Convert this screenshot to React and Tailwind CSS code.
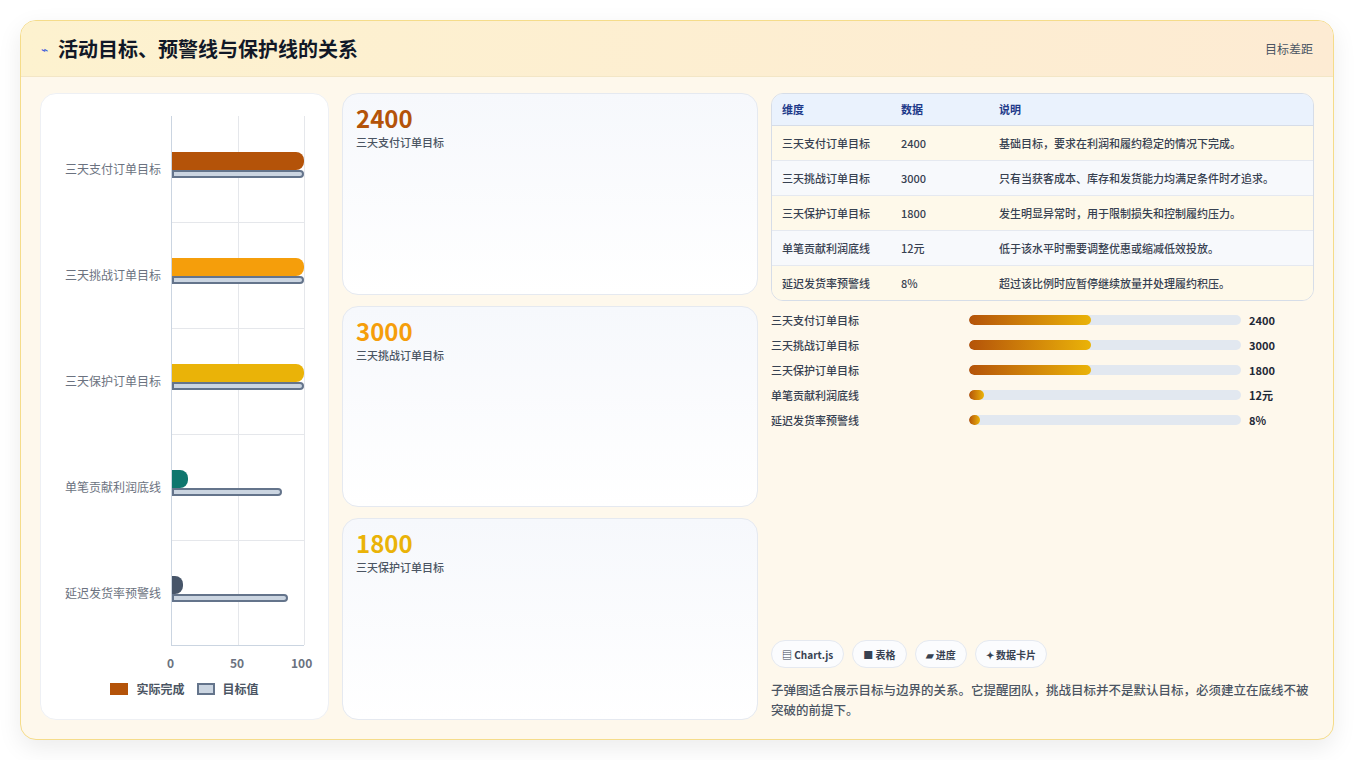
import React from "react";

const F = { fontFamily: '"Noto Sans CJK SC", "Noto Sans", sans-serif' };

const cats = [
  { n: "三天支付订单目标", a: 100, t: 100, c: "#b45309" },
  { n: "三天挑战订单目标", a: 100, t: 100, c: "#f59e0b" },
  { n: "三天保护订单目标", a: 100, t: 100, c: "#eab308" },
  { n: "单笔贡献利润底线", a: 12, t: 83, c: "#0f766e" },
  { n: "延迟发货率预警线", a: 8, t: 88, c: "#475569" },
];
const rows = [
  ["三天支付订单目标", "2400", "基础目标，要求在利润和履约稳定的情况下完成。"],
  ["三天挑战订单目标", "3000", "只有当获客成本、库存和发货能力均满足条件时才追求。"],
  ["三天保护订单目标", "1800", "发生明显异常时，用于限制损失和控制履约压力。"],
  ["单笔贡献利润底线", "12元", "低于该水平时需要调整优惠或缩减低效投放。"],
  ["延迟发货率预警线", "8%", "超过该比例时应暂停继续放量并处理履约积压。"],
];
const prog = [
  ["三天支付订单目标", 45, "2400"],
  ["三天挑战订单目标", 45, "3000"],
  ["三天保护订单目标", 45, "1800"],
  ["单笔贡献利润底线", 5.5, "12元"],
  ["延迟发货率预警线", 4, "8%"],
];

export default function App() {
  return (
    <div style={F} className="w-[1354px] h-[760px] bg-white p-5 box-border">
      <div className="h-[720px] rounded-2xl border border-[#f5dc8a] bg-[#fef8ec] shadow-[0_8px_24px_rgba(0,0,0,0.08)] flex flex-col overflow-hidden">
        <div className="h-[56px] shrink-0 flex items-center justify-between px-5 bg-gradient-to-r from-[#fdf2cf] to-[#fdebd3] border-b border-[#f3e6c6]">
          <div className="flex items-center gap-[10px]">
            <span className="text-[#3b5bdb] text-[12px]">⌁</span>
            <span className="text-[20px] font-bold text-[#111827]">活动目标、预警线与保护线的关系</span>
          </div>
          <span className="text-[12px] text-[#4b5563]">目标差距</span>
        </div>
        <div className="flex-1 flex gap-[13px] px-[19px] pt-4 pb-[19px]">
          {/* chart */}
          <div className="w-[289px] shrink-0 bg-white rounded-2xl border border-[#eef0f4] flex flex-col pt-[22px] pb-[20px]">
            <div className="flex">
              <div className="w-[130px] flex flex-col">
                {cats.map((c) => (
                  <div key={c.n} className="h-[106px] flex items-center justify-end pr-[10px] text-[12px] text-[#6b7280]">{c.n}</div>
                ))}
              </div>
              <div className="relative w-[133px] h-[530px] border-l border-b border-[#cbd5e1]">
                <div className="absolute left-[66px] top-0 bottom-0 w-px bg-[#e5e7eb]" />
                <div className="absolute left-[132px] top-0 bottom-0 w-px bg-[#e5e7eb]" />
                {cats.map((c, i) => (
                  <div key={c.n} className="absolute left-0 right-0" style={{ top: i * 106, height: 106 }}>
                    {i > 0 && <div className="absolute left-0 right-0 top-0 h-px bg-[#e5e7eb]" />}
                    <div className="absolute left-0 top-[36px] h-[18px] rounded-r-[8px]" style={{ width: `${c.a}%`, background: c.c }} />
                    <div className="absolute left-0 top-[54px] h-[8px] rounded-r-[4px] bg-[#cbd5e1] border-2 border-[#64748b]" style={{ width: `${c.t}%` }} />
                  </div>
                ))}
              </div>
            </div>
            <div className="relative h-[20px] ml-[130px] w-[140px] mt-[8px] text-[12px] font-bold text-[#6b7280]">
              <span className="absolute left-[-4px]">0</span>
              <span className="absolute left-[59px]">50</span>
              <span className="absolute left-[120px]">100</span>
            </div>
            <div className="flex justify-center items-center gap-2 mt-[6px] text-[12px] font-bold text-[#4b5563]">
              <span className="w-[18px] h-[12px] bg-[#b45309]" />实际完成
              <span className="w-[18px] h-[12px] bg-[#cbd5e1] border-2 border-[#64748b] ml-1" />目标值
            </div>
          </div>
          {/* cards */}
          <div className="w-[416px] shrink-0 flex flex-col gap-[11px]">
            {[["2400", "三天支付订单目标", "#b45309"], ["3000", "三天挑战订单目标", "#f59e0b"], ["1800", "三天保护订单目标", "#eab308"]].map(([v, l, c]) => (
              <div key={v} className="flex-1 rounded-2xl border border-[#e5e9f0] bg-gradient-to-b from-[#f6f8fc] to-white px-[13px] pt-[8px]">
                <div className="text-[24px] font-bold leading-[32px]" style={{ color: c }}>{v}</div>
                <div className="text-[11px] text-[#4b5563] font-medium">{l}</div>
              </div>
            ))}
          </div>
          {/* right */}
          <div className="flex-1 flex flex-col">
            <div className="rounded-xl border border-[#d6dde8] overflow-hidden text-[11px] font-medium text-[#374151]">
              <div className="flex h-[32px] items-center bg-[#eaf2fd] border-b border-[#d6dde8] text-[#1e3a8a] font-bold">
                <div className="w-[129px] pl-[10px]">维度</div>
                <div className="w-[98px]">数据</div>
                <div className="flex-1">说明</div>
              </div>
              {rows.map((r, i) => (
                <div key={r[0]} className={`flex py-[8px] leading-[18px] ${i % 2 ? "bg-[#f7f9fc]" : "bg-[#fef9ea]"} ${i < 4 ? "border-b border-[#e5e9f0]" : ""}`}>
                  <div className="w-[129px] pl-[10px]">{r[0]}</div>
                  <div className="w-[98px]">{r[1]}</div>
                  <div className="flex-1 pr-[26px]">{r[2]}</div>
                </div>
              ))}
            </div>
            <div className="flex flex-col mt-[10px] gap-[7px]">
              {prog.map(([l, p, v]) => (
                <div key={l} className="flex items-center h-[18px] text-[11px] font-medium text-[#374151]">
                  <div className="w-[198px]">{l}</div>
                  <div className="w-[272px] h-[10px] rounded-full bg-[#e2e8f0] overflow-hidden">
                    <div className="h-full rounded-full bg-gradient-to-r from-[#b45309] to-[#eab308]" style={{ width: `${p}%` }} />
                  </div>
                  <div className="ml-[8px] font-bold text-[#1f2937]">{v}</div>
                </div>
              ))}
            </div>
            <div className="flex-1" />
            <div className="flex gap-2 text-[10px] font-bold text-[#374151]">
              {["▤ Chart.js", "■ 表格", "▰ 进度", "✦ 数据卡片"].map((t) => (
                <span key={t} className="h-[28px] px-[10px] flex items-center rounded-full bg-[#fbfcfe] border border-[#e5e9f0]">{t}</span>
              ))}
            </div>
            <p className="mt-[12px] text-[12.5px] leading-[20px] font-medium text-[#4b5563] pr-1">子弹图适合展示目标与边界的关系。它提醒团队，挑战目标并不是默认目标，必须建立在底线不被突破的前提下。</p>
          </div>
        </div>
      </div>
    </div>
  );
}
